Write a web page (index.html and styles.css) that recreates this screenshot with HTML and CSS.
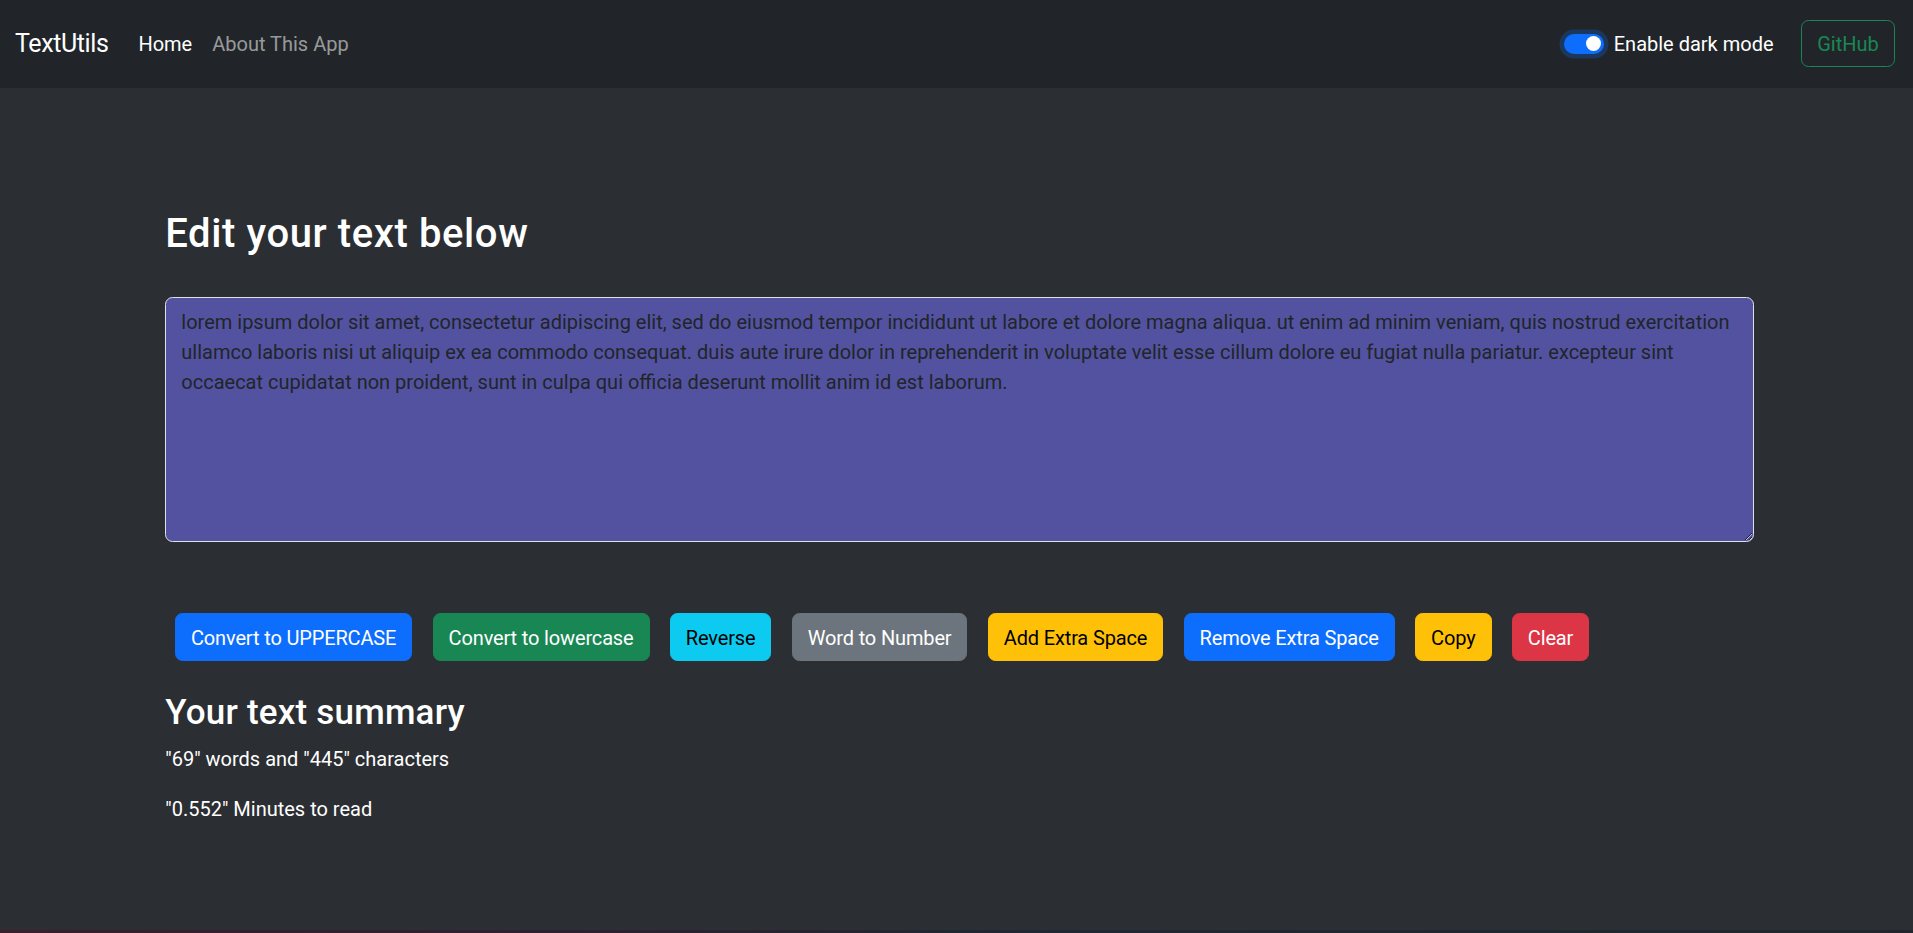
FILE: index.html
```html
<!DOCTYPE html>
<html lang="en">
<head>
<meta charset="utf-8">
<title>TextUtils</title>
<link rel="stylesheet" href="styles.css">
</head>
<body>
<nav class="navbar">
  <a class="brand" href="#">TextUtils</a>
  <ul class="nav-links">
    <li><a class="nav-link active" href="#">Home</a></li>
    <li><a class="nav-link" href="#">About This App</a></li>
  </ul>
  <div class="nav-right">
    <label class="switch-wrap">
      <span class="switch"><span class="knob"></span></span>
      <span class="switch-label">Enable dark mode</span>
    </label>
    <a class="btn-outline" href="#">GitHub</a>
  </div>
</nav>

<main class="container">
  <h2 class="title">Edit your text below</h2>
  <textarea class="editor" rows="8">lorem ipsum dolor sit amet, consectetur adipiscing elit, sed do eiusmod tempor incididunt ut labore et dolore magna aliqua. ut enim ad minim veniam, quis nostrud exercitation ullamco laboris nisi ut aliquip ex ea commodo consequat. duis aute irure dolor in reprehenderit in voluptate velit esse cillum dolore eu fugiat nulla pariatur. excepteur sint occaecat cupidatat non proident, sunt in culpa qui officia deserunt mollit anim id est laborum.</textarea>

  <div class="actions">
    <button class="btn btn-primary">Convert to UPPERCASE</button>
    <button class="btn btn-success">Convert to lowercase</button>
    <button class="btn btn-info">Reverse</button>
    <button class="btn btn-secondary">Word to Number</button>
    <button class="btn btn-warning">Add Extra Space</button>
    <button class="btn btn-primary">Remove Extra Space</button>
    <button class="btn btn-warning">Copy</button>
    <button class="btn btn-danger">Clear</button>
  </div>

  <h3 class="summary-title">Your text summary</h3>
  <p class="summary first">"69" words and "445" characters</p>
  <p class="summary">"0.552" Minutes to read</p>
</main>
<div class="bottom-strip"></div>
</body>
</html>
```
FILE: styles.css
```css
* { box-sizing: border-box; }
html, body { height: 100%; }
body {
  margin: 0;
  background: #2b2e33;
  color: #fff;
  font-family: Roboto, "Liberation Sans", Arial, sans-serif;
  font-size: 20px;
  line-height: 30px;
  display: flex;
  flex-direction: column;
}

/* NAVBAR */
.navbar {
  height: 87.5px;
  flex: 0 0 auto;
  background: #212529;
  display: flex;
  align-items: center;
  padding: 0 18.3px 0 15px;
}
.brand {
  font-size: 25px;
  line-height: 37.5px;
  letter-spacing: -0.4px;
  color: #fff;
  text-decoration: none;
  margin-right: 20px;
}
.nav-links {
  list-style: none;
  margin: 0;
  padding: 0;
  display: flex;
}
.nav-link {
  display: block;
  padding: 0 10px;
  font-size: 20px;
  line-height: 30px;
  color: rgba(255, 255, 255, 0.55);
  text-decoration: none;
}
.nav-link.active { color: #fff; }
.nav-right {
  margin-left: auto;
  display: flex;
  align-items: center;
}
.switch-wrap {
  display: flex;
  align-items: center;
}
.switch {
  width: 40px;
  height: 20px;
  border-radius: 10px;
  background: #0d6efd;
  box-shadow: 0 0 0 4.5px rgba(13, 110, 253, 0.25);
  display: flex;
  justify-content: flex-end;
  align-items: center;
  padding: 0 2.5px;
}
.knob {
  width: 15px;
  height: 15px;
  border-radius: 50%;
  background: #fff;
}
.switch-label {
  margin-left: 10px;
  color: #fff;
  font-size: 20px;
  line-height: 30px;
}
.btn-outline {
  margin-left: 27.6px;
  height: 46.7px;
  padding: 0 15px;
  display: flex;
  align-items: center;
  border: 1.25px solid #198754;
  border-radius: 7.5px;
  color: #198754;
  text-decoration: none;
  font-size: 20px;
}

/* MAIN */
.container {
  flex: 1 0 auto;
  margin-left: 165.3px;
  width: 1589px;
}
.title {
  margin: 122.8px 0 0;
  font-size: 40px;
  font-weight: 500;
  line-height: 48px;
  letter-spacing: 0.6px;
  color: #fff;
}
.editor {
  display: block;
  margin-top: 39px;
  width: 1589px;
  height: 245px;
  padding: 8.9px 15px 6px;
  border: 1.25px solid #dee2e6;
  border-radius: 7.5px;
  background: #5352a0;
  color: #212529;
  font-family: Roboto, "Liberation Sans", Arial, sans-serif;
  font-size: 20px;
  line-height: 30px;
  resize: vertical;
  outline: none;
}
.actions {
  margin-top: 71px;
  padding-left: 9.7px;
  display: flex;
  gap: 20.3px;
}
.btn {
  height: 47.5px;
  padding: 1.3px 15px 0;
  border: 1.25px solid transparent;
  border-radius: 7.5px;
  font-family: Roboto, "Liberation Sans", Arial, sans-serif;
  font-size: 20px;
  line-height: 30px;
  letter-spacing: -0.15px;
  cursor: pointer;
}
.btn-primary { background: #0d6efd; border-color: #0d6efd; color: #fff; }
.btn-success { background: #198754; border-color: #198754; color: #fff; }
.btn-info { background: #0dcaf0; border-color: #0dcaf0; color: #000; }
.btn-secondary { background: #6c757d; border-color: #6c757d; color: #fff; }
.btn-warning { background: #ffc107; border-color: #ffc107; color: #000; }
.btn-danger { background: #dc3545; border-color: #dc3545; color: #fff; }

.summary-title {
  margin: 31.2px 0 0;
  font-size: 35px;
  font-weight: 500;
  line-height: 42px;
  letter-spacing: 0.2px;
  color: #fff;
}
.summary {
  margin: 20.3px 0 0;
  font-size: 20px;
  line-height: 30px;
}
.summary.first { margin-top: 9.9px; }

.bottom-strip {
  flex: 0 0 3px;
  height: 3px;
  background: linear-gradient(90deg, #3a1e2c 0%, #2e2030 30%, #1e2834 55%, #22262c 100%);
}
```
